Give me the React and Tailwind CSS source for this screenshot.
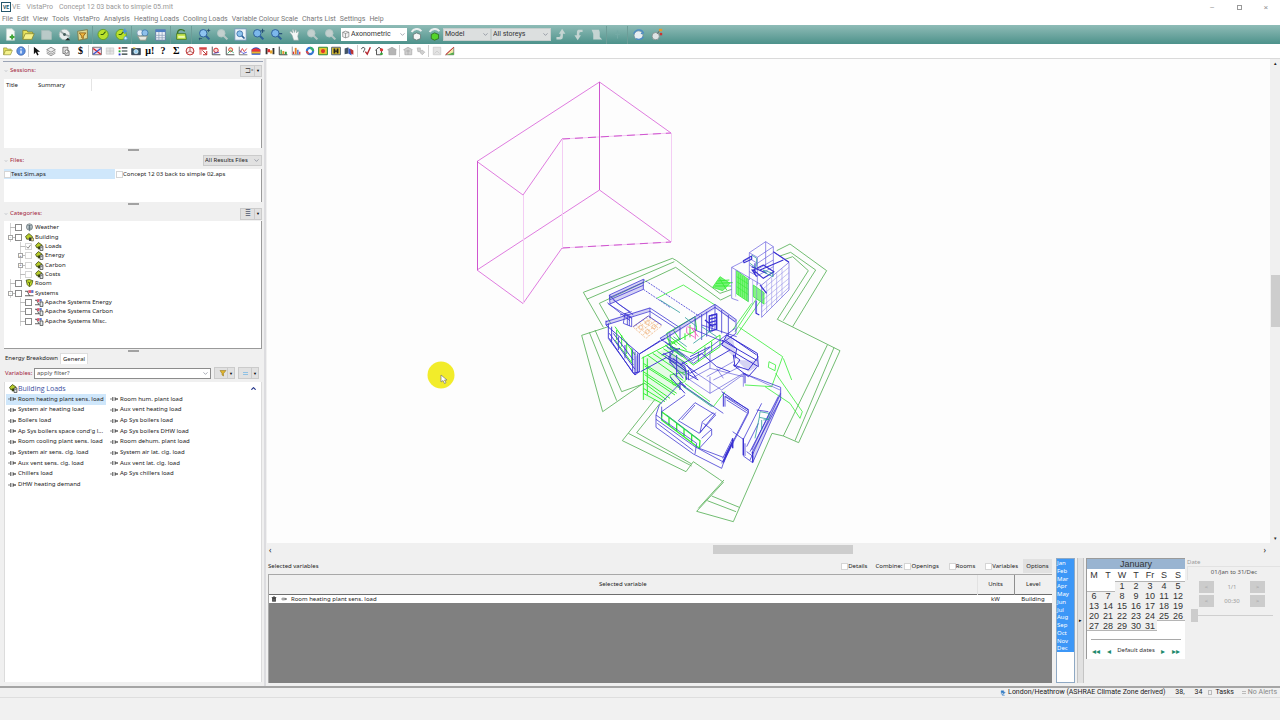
import { useState } from 'react'
import clsx from 'clsx'
import { ChevronDown, ChevronUp } from 'lucide-react'

const MENUS = [
  'File', 'Edit', 'View', 'Tools', 'VistaPro', 'Analysis', 'Heating Loads', 'Cooling Loads',
  'Variable Colour Scale', 'Charts List', 'Settings', 'Help',
]

const MONTHS = ['Jan', 'Feb', 'Mar', 'Apr', 'May', 'Jun', 'Jul', 'Aug', 'Sep', 'Oct', 'Nov', 'Dec']

const WEEKS = [
  ['', '', 1, 2, 3, 4, 5],
  [6, 7, 8, 9, 10, 11, 12],
  [13, 14, 15, 16, 17, 18, 19],
  [20, 21, 22, 23, 24, 25, 26],
  [27, 28, 29, 30, 31, '', ''],
]

const TREE = [
  { name: 'Weather', level: 0, icon: 'weather' },
  { name: 'Building', level: 0, icon: 'building', expander: '-' },
  { name: 'Loads', level: 1, icon: 'load', checked: true, faint: true },
  { name: 'Energy', level: 1, icon: 'load', expander: '+', faint: true },
  { name: 'Carbon', level: 1, icon: 'load', expander: '+', faint: true },
  { name: 'Costs', level: 1, icon: 'load', faint: true },
  { name: 'Room', level: 0, icon: 'room' },
  { name: 'Systems', level: 0, icon: 'system', expander: '-' },
  { name: 'Apache Systems Energy', level: 1, icon: 'apache' },
  { name: 'Apache Systems Carbon', level: 1, icon: 'apache' },
  { name: 'Apache Systems Misc.', level: 1, icon: 'apache' },
]

const VARIABLES = [
  ['Room heating plant sens. load', 'Room hum. plant load'],
  ['System air heating load', 'Aux vent heating load'],
  ['Boilers load', 'Ap Sys boilers load'],
  ["Ap Sys boilers space cond'g l...", 'Ap Sys boilers DHW load'],
  ['Room cooling plant sens. load', 'Room dehum. plant load'],
  ['System air sens. clg. load', 'System air lat. clg. load'],
  ['Aux vent sens. clg. load', 'Aux vent lat. clg. load'],
  ['Chillers load', 'Ap Sys chillers load'],
  ['DHW heating demand'],
]

/* ---------- icons ---------- */

const lens = (fill, rim) => (
  <>
    <path d="M9.5 9.5l4.5 4.5" stroke={rim} strokeWidth="2.6" />
    <circle cx="6.5" cy="6.5" r="4.6" fill={fill} stroke={rim} strokeWidth="1.2" />
  </>
)

const clock = (
  <>
    <circle cx="7.5" cy="8" r="6.3" fill="#b9e02c" stroke="#5f9a18" />
    <path d="M7.5 8l3-3.5M7.5 8H4.5" stroke="#2f5a10" strokeWidth="1.3" fill="none" />
  </>
)

const ICONS = {
  newDoc: <><path d="M3 1h7l3 3v11H3z" fill="#f6faf6" stroke="#c3d3d0" /><path d="M10 8v6M7 11h6" stroke="#3fa535" strokeWidth="2.4" /></>,
  folder: <><path d="M1 14V3h5l1 2h6v2" fill="#e8e35c" stroke="#88892e" /><path d="M1 14l3-7h11l-3 7z" fill="#f5f28c" stroke="#88892e" /></>,
  page: <path d="M2 3h9l3 2v9H2z" fill="#b9cac8" stroke="#a6bcb9" />,
  disc: <><circle cx="8" cy="8" r="6.5" fill="#e8edec" stroke="#a9bab8" /><path d="M8 8L3 4M8 8l6 2" stroke="#a0adac" strokeWidth="2" /><circle cx="8" cy="8" r="1.8" fill="#48605e" /><path d="M9 15l3-3 3 3z" fill="#222" /></>,
  filterBox: <><path d="M2 4l12-2v11l-11 2z" fill="#e2d98f" stroke="#7b7440" /><path d="M4 6h8l-3 4v3l-2-1v-2z" fill="#f0b33a" stroke="#8a5b14" /></>,
  clock,
  clockPlus: <>{clock}<path d="M12 1v6M9.5 4h5" stroke="#4a93e0" strokeWidth="1.8" /><circle cx="13" cy="12.5" r="2" fill="#d8ecfb" stroke="#4a93e0" /></>,
  globe: <><circle cx="5" cy="6" r="3.8" fill="#e7eff6" stroke="#7e9cb6" /><circle cx="11" cy="6" r="3.8" fill="#8fc0ea" stroke="#3e78ad" /><path d="M2 10h12l-2 5H5z" fill="#e8e8e0" stroke="#8d8f82" /></>,
  table: <><path d="M2 2h12v13H2z" fill="#eef2f7" stroke="#5874a0" /><path d="M2 2h12v3H2z" fill="#4f7fc3" /><path d="M6 5v10M10 5v10M2 9h12M2 12h12" stroke="#90a2bd" /></>,
  bag: <><path d="M3 7c0-6 6-6 9-3" stroke="#3b7325" strokeWidth="1.6" fill="none" /><path d="M2 7h11l1 7H2z" fill="#c8e84f" stroke="#3b7325" /><path d="M4 11h8" stroke="#f4ffcf" strokeWidth="1.8" /></>,
  zoomFit: <>{lens('#8ec4f0', '#2d6199')}<path d="M13 1v4M11 3h4M2 12v3M1 13h4" stroke="#274d74" /></>,
  zoomOff: lens('#c3d0ce', '#b4c6c4'),
  zoomBox: <><path d="M1 1h14v14H1z" fill="#eef5fb" stroke="#6f93b5" /><g transform="translate(2 2) scale(.78)">{lens('#8ec4f0', '#2d6199')}</g></>,
  zoomIn: <>{lens('#7cb8ec', '#2d6199')}<path d="M13 1v5M10.5 3.5h5" stroke="#214a73" strokeWidth="1.2" /></>,
  zoomOut: <>{lens('#7cb8ec', '#2d6199')}<path d="M11 7h4" stroke="#214a73" strokeWidth="1.4" /></>,
  hand: <path d="M5 9L2 5l1.4-1L6 6 5 2l1.5-.6L8 5.4 9 2l1.4.4V6l2-2 1 1-1.4 5 1 5H7z" fill="#f3f6f6" stroke="#8fa5a3" strokeWidth=".7" />,
  cubeGrey: <><path d="M4 8l4-2 5 2v5l-5 2-4-2z" fill="#f4f6f6" stroke="#627573" /><path d="M2 5c3-5 9-5 12-1" fill="none" stroke="#e9eeee" strokeWidth="2.4" /></>,
  cubeGreen: <><path d="M4 8l4-2 5 2v5l-5 2-4-2z" fill="#55d42c" stroke="#2a6d1c" /><path d="M2 5c3-5 9-5 12-1" fill="none" stroke="#e9eeee" strokeWidth="2.4" /></>,
  arrowUp: <path d="M3 14h5c3 0 3-2 3-7h3L10 1 6 7h2c0 3 0 4-2 4H3z" fill="#c4d4d2" />,
  arrowDown: <path d="M13 2H9C6 2 6 4 6 9H3l4 6 4-6H9c0-3 0-4 2-4h2z" fill="#c4d4d2" />,
  sheet: <path d="M2 2h9l1 3v6l3 3H4V7z" fill="#c4d4d2" />,
  spark: <path d="M8 3v10M5 8h6" stroke="#74aaa5" strokeWidth="1.4" />,
  orbit: <><circle cx="8" cy="9" r="5.5" fill="#e6eef2" stroke="#6c8a9a" /><path d="M2 7c3-6 10-6 12-1l-3 1M14 11c-2 3-6 4-9 2" fill="none" stroke="#4d8cc4" strokeWidth="1.7" /></>,
  tag: <><circle cx="7" cy="10" r="4.5" fill="#dfe4e4" stroke="#7c8a89" /><path d="M9 7l3-4" stroke="#555" /><path d="M11 1h4v3h-4z" fill="#e8992c" /><path d="M12 6h3v3h-3z" fill="#c33" /></>,
  info: <><circle cx="8" cy="8" r="6.8" fill="#5b8fe0" stroke="#32579b" /><path d="M8 7v5" stroke="#fff" strokeWidth="2.2" /><circle cx="8" cy="4.4" r="1.2" fill="#fff" /></>,
  arrow: <path d="M3 1v12l3-3 2.4 5 2.2-1-2.3-4.8H13z" fill="#111" />,
  layers: <><path d="M1 6l7-4 7 4-7 4z" fill="#eee" stroke="#555" /><path d="M1 9l7 4 7-4M1 11.5l7 4 7-4" fill="none" stroke="#555" /></>,
  docs: <><path d="M3 2h8v4l2 2v7H7l-1-3H3z" fill="#ddd" stroke="#444" /><circle cx="9" cy="9" r="2.6" fill="#fff" stroke="#444" /></>,
  chartX: <><path d="M1 2h14v12H1z" fill="#f3dcec" stroke="#333" /><path d="M2 4l12 9" stroke="#d22" strokeWidth="2" /><path d="M2 13L14 4" stroke="#35c" strokeWidth="2" /></>,
  greyGrid: <path d="M2 3h12v10H2zM2 8h12M8 3v10" fill="#e6e6e6" stroke="#c2c2c2" />,
  list: <><path d="M6 3h9M6 8h9M6 13h9" stroke="#233" strokeWidth="1.8" /><path d="M1 2h3v3H1z" fill="#d33" /><path d="M1 7h3v3H1z" fill="#2a2" /><path d="M1 12h3v3H1z" fill="#23c" /></>,
  camera: <><path d="M1 4h14v10H1z" fill="#356" stroke="#223" /><path d="M3 2h4v2H3z" fill="#e9d34a" /><circle cx="8" cy="9" r="3.4" fill="#9cd0f0" stroke="#fff" /></>,
  roseRed: <><circle cx="8" cy="8" r="6.3" fill="#fdeaea" stroke="#b22" strokeWidth="1.5" /><path d="M8 2v6l5 3M8 8l-5 3" stroke="#822" fill="none" /></>,
  gridRed: <><path d="M2 2h12v4H2z" fill="#d54545" /><path d="M2 6h4v8H2z" fill="#f0a0a0" /><path d="M7 7l7 7M14 8v6H8" stroke="#b22" strokeWidth="1.5" fill="none" /></>,
  axisRed: <><path d="M2 1v13h13" fill="none" stroke="#333" strokeWidth="1.3" /><circle cx="8" cy="7" r="3.6" fill="#fbd5d5" stroke="#c22" strokeWidth="1.5" /><path d="M4 12l9-2" stroke="#44b" strokeWidth="1.3" /></>,
  axisPlot: <><path d="M2 1v13h13" fill="none" stroke="#333" strokeWidth="1.3" /><circle cx="9" cy="6" r="3.2" fill="#fbe2b5" stroke="#c22" strokeWidth="1.3" /><path d="M4 12l5-5 5 4" stroke="#2a6" strokeWidth="1.3" fill="none" /></>,
  lines: <><path d="M2 1v13h13" fill="none" stroke="#333" /><path d="M3 11l4-7 3 5 4-5" fill="none" stroke="#c33" strokeWidth="1.3" /><path d="M3 7l5 5 6-2" fill="none" stroke="#33c" strokeWidth="1.3" /></>,
  bands: <><path d="M1 5q7-6 14 0v9H1z" fill="#2b4fc4" /><path d="M1 6q7-5 14 0v3H1z" fill="#e33" /><path d="M1 9h14v3H1z" fill="#ecb62c" /></>,
  box: <><path d="M1 3h3v10H1zM12 3h3v10h-3z" fill="#333" /><path d="M4 5h4v5H4z" fill="#d33" /><path d="M8 7h4v5H8z" fill="#e7a42b" /></>,
  barsGreen: <><path d="M2 1v13h13" fill="none" stroke="#333" strokeWidth="1.5" /><path d="M4 6h2v7H4zM11 9h3v4h-3z" fill="#2a9a3a" /><path d="M7 8h3v5H7z" fill="#e0962b" /></>,
  barsRed: <><path d="M2 1v13h13" fill="none" stroke="#555" /><path d="M3 9h2v4H3z" fill="#d33" /><path d="M6 3h3v10H6z" fill="#e0812b" /><path d="M10 6h2v7h-2z" fill="#345bc4" /><path d="M13 9h2v4h-2z" fill="#d33" /></>,
  donut: <><circle cx="8" cy="8" r="5" fill="none" stroke="#3578d2" strokeWidth="3.4" /><path d="M8 3a5 5 0 0 1 5 5" fill="none" stroke="#35b06a" strokeWidth="3.4" /><path d="M3 8a5 5 0 0 0 3 4.6" fill="none" stroke="#d84d4d" strokeWidth="3.4" /></>,
  heat: <><path d="M1 2h14v12H1z" fill="#e6c832" stroke="#2c8a3a" strokeWidth="1.6" /><circle cx="8" cy="8" r="3.4" fill="#e0382b" /></>,
  heatDark: <><path d="M1 2h14v12H1z" fill="#e6c832" stroke="#567" strokeWidth="1.6" /><path d="M4 4h3v8H4zM9 4h3v8H9zM7 7h2v2H7z" fill="#222" /></>,
  surface: <><path d="M1 4l6-2v10l-6 1z" fill="#456" /><path d="M7 3l5 3v9l-5-3z" fill="#3557c4" /><path d="M10 4l5 3v7l-4-2z" fill="#b33" /></>,
  check: <><path d="M7 9l3 4 5-11" fill="none" stroke="#b3262e" strokeWidth="2.2" /><path d="M1 5c0-4 6-3 5 0C6 7 4 7 4 10" fill="none" stroke="#333" strokeWidth="1.4" /></>,
  house: <><path d="M2 7l6-5 6 5M4 6v8h8V6" fill="#f5f5f5" stroke="#333" strokeWidth="1.3" /><circle cx="12" cy="6" r="2.6" fill="#d33" /><path d="M10 11h4v3h-4z" fill="#3a3" /></>,
  greyHouse: <path d="M1 6l7-4 7 4-1 1v7H3V7z" fill="#b5b5b5" stroke="#9b9b9b" />,
  greyCube: <path d="M1 6l7-4 7 4-1 1v7H3V7zM8 6v8M5 8h6" fill="#cfcfcf" stroke="#a0a0a0" />,
  greyPlug: <path d="M2 3h5v4h4l3 3-4 4-3-3V9H3z" fill="#cfcfcf" stroke="#ababab" />,
  greyPic: <path d="M2 2h12v12H2zM4 12l4-4 4 4" fill="#e3e3e3" stroke="#c4c4c4" />,
  ramp: <><path d="M1 14L14 2v12z" fill="#f2e7a8" stroke="#555" /><path d="M1 14L14 2" stroke="#d33" strokeWidth="1.6" /><path d="M4 14l10-4v4z" fill="#4aad4a" /></>,
  weather: <><circle cx="8" cy="7" r="5.6" fill="#c9d3d6" stroke="#4d585c" /><path d="M4 5h8M5 9h7M8 3v11" stroke="#50616b" strokeWidth="1.3" /><path d="M6 12h4l-2 3z" fill="#789" /></>,
  building: <><path d="M1 6l6-5 6 5v5H3z" fill="#b7cc2c" stroke="#3b4312" strokeWidth="1.3" /><path d="M7 8h4v6H7z" fill="#333" /><path d="M11 9h4v5h-4z" fill="#f3ef8a" stroke="#333" /></>,
  load: <><path d="M1 6l5-5 6 4v5H3z" fill="#b7cc2c" stroke="#3b4312" strokeWidth="1.4" /><path d="M5 8h4v5H5z" fill="#3d4a16" /><path d="M9 7h5v8H9z" fill="#e9eef0" stroke="#222" strokeWidth="1.2" /><path d="M10 10h3" stroke="#222" /></>,
  room: <><path d="M2 2l6-1 6 2-2 7-4 4-4-4z" fill="#c6e02c" stroke="#2d3b10" strokeWidth="1.3" /><path d="M5 5l3 2 3-3M8 7v5" stroke="#2d3b10" fill="none" strokeWidth="1.4" /></>,
  system: <><path d="M0 4h6M0 12h15M4 4l4 8" stroke="#444" strokeWidth="1.5" fill="none" /><path d="M6 2h5v5H6z" fill="#e4586b" /><path d="M11 2h4v5h-4z" fill="#5a72c8" /></>,
  apache: <><path d="M0 4h5M0 12h8M3 4l4 8" stroke="#444" strokeWidth="1.5" fill="none" /><path d="M4 2h4v5H4z" fill="#e4586b" /><path d="M8 2h4v4H8z" fill="#5a72c8" /><path d="M9 7h5v8H9z" fill="#e9eef0" stroke="#222" strokeWidth="1.2" /></>,
  pin: <path d="M0 8h5M5 4v8M5 6h6v4H5M11 5v6M11 7h5M11 9h5" fill="none" stroke="#555" strokeWidth="1.4" />,
  trash: <><path d="M2 4h12M6 2h4" stroke="#222" strokeWidth="2" /><path d="M3 5h10v10H3z" fill="#333" /><path d="M6 7v6M10 7v6" stroke="#ccc" /></>,
  funnel: <path d="M2 3h12l-5 6v5l-3-2V9z" fill="#e0b52e" stroke="#8b6d17" />,
  sync: <><path d="M3 2h7v4h4l-5 5V7H3zM13 14H6v-4H2" fill="#2c79c4" stroke="#2c79c4" /></>,
  cube: <path d="M3 4l5-2 6 2v8l-6 2-5-2zM3 4l5 2 6-2M8 6v8" fill="#f2f2f2" stroke="#666" />,
}

function Icon({ name, className = 'size-[11px]' }) {
  return <svg viewBox="0 0 16 16" className={clsx('shrink-0', className)} aria-hidden="true">{ICONS[name]}</svg>
}

function ToolGroup({ icons, label, big, className }) {
  return (
    <div className={clsx('flex items-center', className)}>
      {icons.map((name, i) => (
        <button key={i} aria-label={label + ' ' + (i + 1)} className={clsx('flex items-center justify-center shrink-0', big ? 'w-[18px] h-4' : 'w-[13px] h-3')}>
          {ICONS[name]
            ? <Icon name={name} className={big ? 'size-[13px]' : 'size-[10px]'} />
            : <span className="font-['Liberation_Serif',serif] text-[10px] leading-none font-bold text-black">{name}</span>}
        </button>
      ))}
    </div>
  )
}

function Sep({ big }) {
  return <span className={clsx('shrink-0 w-px mx-px', big ? 'h-[18px] bg-[#6d9d98]' : 'h-3 bg-[#cfcfcf]')} />
}

function DropDown({ label, options, className }) {
  return (
    <div className={clsx('relative flex shrink-0', className)}>
      <select aria-label={label} className="appearance-none size-full pl-px pr-3 outline-none">
        {options.map(o => <option key={o}>{o}</option>)}
      </select>
      <ChevronDown className="absolute right-px top-0 h-full w-[7px] pointer-events-none text-gray-500" />
    </div>
  )
}

function Tick({ label, checked = false, faint, className, children }) {
  const [on, setOn] = useState(checked)
  return (
    <label className={clsx('flex items-center', className)}>
      <span className="relative flex">
        <input
          type="checkbox"
          aria-label={label}
          checked={on}
          onChange={e => setOn(e.target.checked)}
          className={clsx('appearance-none size-[7px] bg-white border', faint ? 'border-[#d5d5d5]' : 'border-[#8a8a8a]')}
        />
        {on && (
          <svg viewBox="0 0 8 8" className="absolute inset-0 size-[7px] pointer-events-none">
            <path d="M1.5 4l2 2 3-4" fill="none" stroke="#777" />
          </svg>
        )}
      </span>
      {children}
    </label>
  )
}

/* ---------- left panel ---------- */

function SectionHead({ title, children, className }) {
  return (
    <div className={clsx('flex items-center justify-between pl-[2px]', className)}>
      <h2 className="flex items-center gap-[2px] text-[#a3243c]">
        <ChevronDown className="size-1 text-gray-500" />
        {title}
      </h2>
      {children}
    </div>
  )
}

function Handle() {
  return (
    <div className="h-1 shrink-0 flex items-center justify-center">
      <span className="w-[11px] h-[2px] bg-[#a2a2a2]" />
    </div>
  )
}

function SplitButton({ label, children, className = 'w-[22px]' }) {
  return (
    <button aria-label={label} className={clsx('h-[12px] flex items-center justify-between bg-[#e1e1e1] border border-[#cbcbcb] pl-1', className)}>
      {children}
      <span className="h-full w-[7px] border-l border-[#cbcbcb] flex items-center justify-center text-[4px] text-black">▼</span>
    </button>
  )
}

function Tree() {
  return (
    <ul className="relative grid auto-rows-fr h-[103px] mt-[2px]">
      {TREE.map(node => (
        <li key={node.name} className={clsx('flex items-center', node.level ? 'pl-3' : 'pl-[2px]')}>
          <span className="relative w-[9px] h-full shrink-0 flex items-center">
            <span className="absolute left-1 top-0 w-px h-full bg-[#d2d2d2]" />
            <span className="absolute left-1 w-[5px] h-px bg-[#bdbdbd]" />
            {node.expander && (
              <span className="relative ml-[2px] size-[5px] border border-[#a5a5a5] bg-white flex items-center justify-center text-[4px] leading-none">
                {node.expander}
              </span>
            )}
          </span>
          <Tick label={node.name} checked={node.checked} faint={node.faint}>
            <Icon name={node.icon} className="size-[9px] ml-[3px] mr-px" />
            {node.name}
          </Tick>
        </li>
      ))}
    </ul>
  )
}

function Variable({ name, selected }) {
  return (
    <button className={clsx('flex items-center gap-[2px] h-full pl-[2px] whitespace-nowrap text-left', selected && 'bg-[#cfe7fb]')}>
      <Icon name="pin" className="size-[8px]" />
      {name}
    </button>
  )
}

function SidePanel() {
  return (
    <aside className="w-[266px] shrink-0 flex flex-col bg-[#f0f0f0] border-r-2 border-[#dcdcdf] pl-1 pr-[2px] pb-1">
      <div className="h-px mt-[2px] -mx-px bg-[#9aa3b5] shrink-0" />
      <SectionHead title="Sessions:" className="h-[17px] -ml-[2px]">
        <SplitButton label="Session actions"><span className="text-[7px] leading-none text-[#555]">⊐ˣ</span></SplitButton>
      </SectionHead>
      <table className="block h-[69px] shrink-0 bg-white border-r border-[#9a9a9a] text-left">
        <thead>
          <tr className="h-3">
            <th className="font-normal w-[34px] pl-[2px]">Title</th>
            <th className="font-normal w-[53px] border-r border-[#e4e4e4]">Summary</th>
          </tr>
        </thead>
      </table>
      <Handle />

      <SectionHead title="Files:" className="h-[17px] -ml-[2px]">
        <DropDown label="Files" options={['All Results Files']} className="w-[59px] h-[11px] bg-[#e1e1e1] border border-[#cbcbcb]" />
      </SectionHead>
      <div className="h-[33px] shrink-0 bg-white border-r border-[#9a9a9a]">
        <div className="flex h-[10px]">
          <Tick label="Test Sim.aps" faint className="w-[111px] bg-[#cfe7fb]">Test Sim.aps</Tick>
          <Tick label="Concept 12 03 back to simple 02.aps" faint className="pl-px">Concept 12 03 back to simple 02.aps</Tick>
        </div>
      </div>
      <Handle />

      <SectionHead title="Categories:" className="h-[15px] -ml-[2px]">
        <SplitButton label="Category view"><span className="text-[7px] leading-none text-gray-500">≣</span></SplitButton>
      </SectionHead>
      <div className="h-[128px] shrink-0 bg-white border-r border-b border-[#9a9a9a]">
        <Tree />
      </div>
      <Handle />

      <div className="flex items-center h-[11px] shrink-0" role="tablist">
        <button role="tab" className="pl-px pr-[2px]">Energy Breakdown</button>
        <button role="tab" aria-selected="true" className="bg-white h-full px-[2px] border border-[#dedede] border-b-0">General</button>
      </div>
      <div className="flex items-center h-[18px] shrink-0 pl-px">
        <label htmlFor="filter" className="text-[#a3243c] w-[29px]">Variables:</label>
        <div className="relative flex">
          <input id="filter" defaultValue="apply filter?" className="w-[177px] h-[11px] bg-white border border-[#8c8c8c] px-[2px] text-[#555] outline-none" />
          <ChevronDown className="absolute right-[2px] top-[2px] size-[7px] text-gray-500" />
        </div>
        <SplitButton label="Filter" className="w-[21px] ml-[3px]"><Icon name="funnel" className="size-[8px]" /></SplitButton>
        <SplitButton label="Sort" className="w-[21px] ml-[3px]"><span className="w-[5px] h-[3px] border-y border-[#8fc1e4]" /></SplitButton>
      </div>
      <div className="flex-1 bg-white border-x border-[#dcdcdc]">
        <div className="flex items-center justify-between h-[12px] px-1">
          <h3 className="flex items-center font-['Open_Sans',sans-serif] text-[7px] text-[#3b50a0]">
            <Icon name="load" className="size-[9px]" />
            Building Loads
          </h3>
          <ChevronUp className="size-[7px] text-[#23348a]" strokeWidth={4} />
        </div>
        <div className="grid auto-rows-fr grid-cols-[100px_1fr] gap-x-[2px] h-[96px] pl-px">
          {VARIABLES.map(([left, right]) => [
            <Variable key={left} name={left} selected={left === VARIABLES[0][0]} />,
            right ? <Variable key={right} name={right} /> : <span key="blank" />,
          ])}
        </div>
      </div>
    </aside>
  )
}

/* ---------- model view ---------- */

function Model() {
  return (
    <svg viewBox="267 59 1003 484" preserveAspectRatio="xMinYMin meet" className="absolute inset-0 size-full" role="img" aria-label="Axonometric model">
      {/* detached magenta block */}
      <g fill="none" stroke="#df7cdf" strokeWidth="1">
        <path d="M562 139L523 195 477 161.500 599.500 82 671 133M562 248L523 303.500 477 270 599.500 190 671 242" />
        <path d="M562 139L671 133M562 248L671 242" stroke="#f4c6f4" />
        <path d="M562 139L671 133M562 248L671 242" strokeDasharray="8 5" stroke="#cf55cf" />
        <path d="M477.500 161V270M599.500 82V190" stroke="#cf55cf" />
        <path d="M523.500 195V303M562.500 139V248M671.500 133V242" stroke="#f4cdf4" />
      </g>

      <g transform="translate(570 230) scale(.33333)" fill="none" strokeLinejoin="round">
        {/* site outlines */}
        <g stroke="#5cb35c" strokeWidth="2.6">
          <path d="M100 292L40 187 307 85 320 92 450 190 485 178M50 208L313 95M122 280L88 220 317 112 452 210 483 195" />
          <path d="M620 62L660 42 770 122 668 290M630 78L662 67 737 120 640 272M645 88L668 80 715 122 622 268L810 362 686 638 640 618 606 610 490 875 380 844 460 757 448 748 370 695 348 725 157 632 255 508" />
          <path d="M115 290L35 316 98 545 220 460M58 307L140 512M75 300L155 485 225 460M772 345L640 618M792 353L675 632" />
          <path d="M175 610L365 708M270 520L200 608 365 702M425 798L508 832M412 812L498 845M385 835L462 750" />
        </g>

        {/* planting and glazing */}
        <g stroke="#36ee36" strokeWidth="2.4">
          <path d="M260 205L340 165 435 225M508 292L638 380 605 470 525 465M617 430L697 545 690 565 660 520 585 470M597 395L617 405 615 422 595 412ZM640 385L665 450" />
          <path d="M560 205L495 305M570 215L500 315M545 220L488 300" />
          <path d="M428 172L450 140 480 160 458 182Z" fill="#36ee36" fillOpacity=".65" />
          <path d="M434 168L484 168M438 160L488 158M443 153L478 150M448 145L470 180" strokeWidth="3" />
          <path d="M500 122V192L535 215V148ZM550 165V200L582 222V188Z" fill="#36ee36" fillOpacity=".6" />
          <path d="M506 130V195M512 134V198M518 138V202M524 142V206M530 146V210M500 140L535 162M500 155L535 178M500 170L535 194" strokeWidth="2" />
          <path d="M220 385L300 350 350 410 330 470 275 520 220 508Z" fill="#36ee36" fillOpacity=".12" stroke="none" />
          <path d="M220 380V510M215 385L330 325M220 400L330 470M224 408L330 475M220 425L320 490M224 434L315 495M220 450L300 505M224 460L290 510M220 475L285 515M220 490L275 520M232 375L340 452M248 370L345 435M262 364L350 425M280 356L352 402M232 385V495" strokeWidth="3" />
          <path d="M135 290L195 375M140 300V330M155 315V350M170 335V372M185 355V395M135 330L190 405" strokeWidth="3" />
          <path d="M290 310L375 260 380 300 300 345ZM300 350L370 405 450 350V315L370 370ZM385 365V395M405 350V380M425 335V365M345 330V310M360 322V285M300 320L350 360M295 340L345 380M290 325L320 345M285 345L330 375M310 300L330 330" strokeWidth="3" />
          <path d="M275 545L390 632 388 655 275 570ZM297 562V588M320 579V605M342 595V621M365 612V638" strokeWidth="4" />
          <path d="M335 465L430 530 465 485M345 460L420 515M300 435L350 425 345 455 310 465Z" />
        </g>

        {/* furniture */}
        <g stroke="#efb27c" strokeWidth="2">
          <path d="M188 290L235 258 275 288 228 325ZM197 284L237 318M208 277L247 310M219 270L257 302M228 263L266 295M197 297L245 265M208 306L256 273M218 315L265 281" strokeDasharray="7 3" />
          <circle cx="212" cy="292" r="6" /><circle cx="232" cy="278" r="6" /><circle cx="232" cy="305" r="6" /><circle cx="252" cy="290" r="6" />
        </g>
        <path d="M352 290L376 298V328M350 292V308L374 322M365 295L385 320" stroke="#ee55bb" strokeWidth="2.6" />

        {/* shaded roof edges and walls */}
        <g fill="#4a40d8" fillOpacity=".22">
          <path d="M118 195L220 148V178L120 222ZM108 272L240 232V242L112 286ZM270 325L435 223 440 234 278 334ZM435 223L500 270 495 278 435 234Z" />
          <path d="M195 380L208 372V425L195 435ZM455 345L470 315 490 330 500 390 562 392V410L535 425ZM300 365L345 395V440L300 405Z" />
          <path d="M545 660L600 545 632 480V508L548 698Z" />
        </g>

        {/* walls */}
        <g stroke="#3a32d2" strokeWidth="2.3">
          <path d="M485 112V205L505 212M485 112L575 165V262L657 180V97L575 165M657 97L610 65M538 68L587 35 610 50V140M538 68V150M538 68L562 82V165M587 35V110M562 82L610 50M485 112L538 85M538 85L562 100 610 68M538 105L562 118 610 90M538 125L562 138 610 110" strokeWidth="2" stroke="#6058de" />
          <path d="M575 180L657 112M575 197L657 128M575 213L657 145M575 230L657 160M575 246L657 172M497 120V200M535 140V215M548 150V225M560 158V252M590 155V248M605 143V232M620 130V218M636 116V202" strokeWidth="1.4" stroke="#7f79e6" />
          <path d="M520 92L545 78 545 88 522 98ZM550 120L580 105 612 125 580 145ZM555 100V135M545 110L590 130M545 118L560 140M570 120L640 90M570 165L590 190M568 255L558 250V212M610 65L657 97" strokeWidth="3.500" />

          <path d="M118 195L220 148V178L120 222ZM118 203L220 157M118 210L220 166M115 222L185 265M128 208L190 255M112 218L180 272M118 195L145 222 180 245" />
          <path d="M220 148L390 260M220 178L300 232" strokeDasharray="6 3" />
          <path d="M108 275L240 234 325 290M108 285L240 244 318 295M240 234V265M165 250L185 262V290L160 280ZM172 255V285M178 258V288M150 255L185 245M190 290L235 258 275 285" />
          <path d="M108 272V285L208 372 270 332M115 280V325L195 435 208 425V372M125 290V335M195 365V435M202 370V428M188 358V425M118 310L195 418M118 325L190 430M208 372L285 325M212 425L290 382M130 310L190 390M145 320V360M165 345V385" strokeWidth="2.800" />

          <path d="M270 325L435 223 500 270M270 325L370 400 498 310V270M275 332L435 232 495 275M285 335L368 392 495 295M300 310V345M330 290V330M375 265V300M395 252V330M410 245V320M435 225V300M455 240V310M475 255V320M418 255V300M426 252V305M440 250L440 300M395 285L500 320M375 300L460 335" />
          <path d="M418 258L440 252V298L418 304ZM418 268L440 262M418 278L440 272M418 288L440 282M405 270L430 290" strokeWidth="4" />
          <path d="M455 345L565 410 562 370 470 315M455 330L562 392M470 315L455 345M565 380L535 420 490 405 535 440 560 412M490 375L510 390 495 410ZM480 320L560 375M465 330L500 355 495 385" strokeWidth="3" />
          <path d="M280 370L345 410M285 380L350 425M300 365V400M320 375V440M275 375L330 355M310 385L360 430 420 395 480 360M350 405L380 445M345 410L350 450M290 350L310 365 295 385 320 400M335 395L380 430M300 395L340 445M360 380L420 350M330 405L395 370 440 410 480 425" strokeWidth="2.800" />
          <path d="M420 365V415L355 450M420 415L520 440M380 430L455 480M410 440L490 395M430 450L510 410M455 480L525 430M460 445L440 415M420 440V490L345 440M420 490L520 430L630 480M520 430V470" strokeWidth="1.600" />

          <path d="M330 460L460 550M258 555L268 525 330 460 348 470M258 555V592L370 672 455 715 465 685 535 550V538L465 498V530M258 568L375 650 458 695M262 580L370 662M275 530V560M258 555L380 640 375 672" />
          <path d="M345 495L275 545M375 518L325 572 388 610 437 555ZM375 525L335 570M437 548L390 608 397 575 430 548M388 655L425 615V598L400 580M388 655L460 682M425 598L395 625M465 500L535 545 455 700M470 510L530 548M488 640L460 700M488 625L458 685" />
          <path d="M488 625V655M485 640L460 695M490 630L465 680" strokeWidth="4.500" />
          <path d="M520 430L632 472V508L548 698 520 678V628L575 520M632 508L545 670M625 500L540 665M632 490L540 690M520 628L488 605M525 640V678M548 680V698M530 665L550 680M565 580L530 650M545 660L600 545M595 545L560 540" />
          <path d="M520 625V675M548 665V697" strokeWidth="4" />
          <path d="M525 430V460M460 490V530M455 485L535 540M330 455V480M300 440L345 490M190 430L210 425M310 430L345 470M350 430L385 450M355 420V450" strokeWidth="3" />
        </g>

        {/* partitions */}
        <g stroke="#2e9c9c" strokeWidth="2.400">
          <path d="M570 545L597 550V568L568 562ZM568 562L555 625M575 570V600M597 568L580 570M270 210L330 248M345 262L380 290M545 75L560 85V110M540 100L560 115M580 120L608 130V140L585 128ZM370 340L425 300M310 320L350 350M340 470L425 530M290 555L385 628M395 290L440 320M300 350L335 380" />
        </g>
      </g>

      {/* pointer highlight */}
      <circle cx="441" cy="375" r="13.500" fill="#f2ec2a" />
      <path d="M441 375v7l2-1.500 1.500 3 1.500-.8-1.500-2.700h2.500z" fill="#fff" stroke="#777" strokeWidth=".7" />
    </svg>
  )
}

/* ---------- lower panel ---------- */

function SelectedVariables() {
  return (
    <section className="flex-1 flex flex-col min-w-0 pl-[2px]">
      <div className="flex items-center h-4 shrink-0">
        <h2 className="flex-1">Selected variables</h2>
        <Tick label="Details" faint className="mr-[8px]">Details</Tick>
        <span className="mr-[2px]">Combine:</span>
        <Tick label="Openings" faint className="mr-[10px]">Openings</Tick>
        <Tick label="Rooms" faint className="mr-[10px]">Rooms</Tick>
        <Tick label="Variables" faint className="mr-[5px]">Variables</Tick>
        <button className="bg-[#e1e1e1] h-[14px] w-[29px]">Options</button>
      </div>
      <div className="flex-1 bg-[#808080] border-t border-l border-[#a8a8a8]">
        <table className="w-full border-collapse text-center">
          <thead>
            <tr className="h-[19px] bg-[#f0f0f0] border-b border-[#6e6e6e]">
              <th className="font-normal">Selected variable</th>
              <th className="font-normal w-[37px] border-l border-[#e2e2e2]">Units</th>
              <th className="font-normal w-[38px] border-l border-[#8f8f8f]">Level</th>
            </tr>
          </thead>
          <tbody>
            <tr className="h-2 bg-white leading-[8px]">
              <td>
                <span className="flex items-center gap-1 pl-[2px]">
                  <Icon name="trash" className="size-[6px]" />
                  <Icon name="pin" className="size-[6px]" />
                  <span>Room heating plant sens. load</span>
                </span>
              </td>
              <td>kW</td>
              <td>Building</td>
            </tr>
          </tbody>
        </table>
      </div>
    </section>
  )
}

function Calendar() {
  return (
    <div className="w-[99px] h-[101px] shrink-0 bg-white border-t border-l border-[#9a9a9a] font-['Liberation_Sans',sans-serif] text-[9px] text-[#333]">
      <table className="w-full table-fixed border-collapse text-center leading-[10px]">
        <caption className="bg-[#99b4d1] h-[10px] leading-[10px]">January</caption>
        <thead>
          <tr className="h-3">
            {['M', 'T', 'W', 'T', 'Fr', 'S', 'S'].map((d, i) => <th key={i} className="font-normal p-0">{d}</th>)}
          </tr>
        </thead>
        <tbody>
          {WEEKS.map((week, w) => (
            <tr key={w} className="h-[10px]">
              {week.map((day, i) => (
                <td
                  key={i}
                  className={clsx(
                    'p-0 border-[#b5b5b5]',
                    day && 'bg-[#f0f0f0]',
                    day && (w === 0 || (w === 1 && i < 2)) && 'shadow-[inset_0_1px_0_#b5b5b5]',
                    day && ((w === 4) || (w === 3 && i > 4)) && 'shadow-[inset_0_-1px_0_#b5b5b5]',
                  )}
                >
                  {day}
                </td>
              ))}
            </tr>
          ))}
        </tbody>
      </table>
      <div className="mx-1 mt-2 border-t border-[#a9a9a9] h-4 flex items-end justify-between px-px text-[#1c8a6c] font-['Open_Sans',sans-serif] text-[8px]">
        <button aria-label="First">◂◂</button>
        <button aria-label="Previous">◂</button>
        <button className="font-['Noto_Sans',sans-serif] text-[6px] text-[#333]">Default dates</button>
        <button aria-label="Next">▸</button>
        <button aria-label="Last">▸▸</button>
      </div>
    </div>
  )
}

function Stepper({ value }) {
  return (
    <div className="flex items-center justify-between pl-3 pr-[15px] h-[14px]">
      <button aria-label="Back" className="w-[15px] h-[12px] bg-[#cccccc]">&lt;</button>
      {value}
      <button aria-label="Forward" className="w-[15px] h-[12px] bg-[#cccccc]">&gt;</button>
    </div>
  )
}

function DatePanel() {
  return (
    <fieldset className="w-[95px] shrink-0 text-[#9a9a9a] pl-[2px]">
      <legend className="leading-[8px]">Date</legend>
      <p className="border-t border-l border-[#e2e2e2] h-[14px] pt-px text-center text-[#555]">01/Jan to 31/Dec</p>
      <Stepper value="1/1" />
      <Stepper value="00:30" />
      <input
        type="range"
        aria-label="Time"
        defaultValue="0"
        className="appearance-none block w-[82px] ml-1 mt-px h-[13px] bg-[linear-gradient(#cfcfcf,#cfcfcf)] bg-[length:100%_1px] bg-center bg-no-repeat [&::-webkit-slider-thumb]:appearance-none [&::-webkit-slider-thumb]:w-[7px] [&::-webkit-slider-thumb]:h-[13px] [&::-webkit-slider-thumb]:bg-[#cccccc]"
      />
    </fieldset>
  )
}

export default function App() {
  return (
    <div className="h-screen flex flex-col overflow-hidden bg-[#f0f0f0] font-['Noto_Sans',sans-serif] text-[6px] leading-[9px] text-[#222]">
      {/* Title bar */}
      <header className="bg-white font-['Roboto',sans-serif] text-[7px] text-[#999]">
        <div className="flex items-center h-[14px] pl-px">
          <span className="size-[10px] border border-[#24566b] text-[#24566b] font-bold text-[5px] leading-[8px] text-center">VE</span>
          <span className="ml-px">VE</span>
          <span className="ml-[6px]">VistaPro</span>
          <h1 className="ml-[6px]">Concept 12 03 back to simple 05.mit</h1>
          <div className="ml-auto flex items-center gap-[22px] pr-[12px] text-[8px]">
            <button aria-label="Minimise">–</button>
            <button aria-label="Restore"><span className="block size-[5px] border border-[#999]" /></button>
            <button aria-label="Close">×</button>
          </div>
        </div>
        <nav className="flex items-center gap-1 h-[11px] pl-[2px] text-[#777]">
          {MENUS.map(m => <button key={m}>{m}</button>)}
        </nav>
      </header>

      {/* Main toolbar */}
      <div className="flex items-center h-[19px] shrink-0 pl-px bg-linear-to-b from-[#8fbcb7] to-[#4c928b] font-['Roboto',sans-serif] text-[7px] text-[#333]">
        <ToolGroup big label="File tool" icons={['newDoc', 'folder', 'page', 'disc', 'filterBox']} />
        <Sep big />
        <ToolGroup big label="Clock tool" icons={['clock', 'clockPlus']} />
        <Sep big />
        <ToolGroup big label="Data tool" icons={['globe', 'table']} />
        <Sep big />
        <ToolGroup big label="Apply tool" icons={['bag']} />
        <Sep big />
        <ToolGroup big label="View tool" className="ml-[2px]" icons={['zoomFit', 'zoomOff', 'zoomBox', 'zoomIn', 'zoomOut', 'hand', 'zoomOff', 'zoomOff']} />
        <div className="flex items-center bg-white h-[13px] w-[66px] ml-[2px]">
          <Icon name="cube" className="size-[9px]" />
          <DropDown label="View" options={['Axonometric']} className="flex-1" />
        </div>
        <ToolGroup big label="Model tool" icons={['cubeGrey', 'cubeGreen']} />
        <DropDown label="Mode" options={['Model']} className="w-[48px] h-[13px] bg-[#dcdfdf] border border-[#c6cecd]" />
        <DropDown label="Storeys" options={['All storeys']} className="w-[60px] h-[13px] bg-[#dcdfdf] border border-[#c6cecd]" />
        <ToolGroup big label="Level tool" icons={['arrowUp', 'arrowDown', 'sheet']} />
        <Sep big />
        <ToolGroup big label="Snap tool" icons={['spark']} />
        <Sep big />
        <ToolGroup big label="Orbit tool" icons={['orbit', 'tag']} />
      </div>

      {/* Chart toolbar */}
      <div className="flex items-center h-[15px] shrink-0 pl-px bg-white border-b border-[#dadada]">
        <ToolGroup label="Open" icons={['folder', 'info']} />
        <Sep />
        <ToolGroup label="Select" className="w-[57px] justify-between" icons={['arrow', 'layers', 'docs', '$']} />
        <Sep />
        <ToolGroup
          label="Chart"
          className="w-[266px] justify-between"
          icons={['chartX', 'greyGrid', 'list', 'camera', 'μ!', '?', 'Σ', 'roseRed', 'gridRed', 'axisRed', 'axisPlot', 'lines', 'bands', 'box', 'barsGreen', 'barsRed', 'donut', 'heat', 'heatDark', 'surface']}
        />
        <Sep />
        <ToolGroup label="Check" icons={['check', 'house', 'greyHouse']} />
        <Sep />
        <ToolGroup label="Part" icons={['greyCube', 'greyPlug']} />
        <Sep />
        <ToolGroup label="Image" icons={['greyPic', 'ramp']} />
      </div>

      <div className="flex-1 flex min-h-0">
        <SidePanel />
        <main className="flex-1 flex flex-col min-w-0">
          <div className="flex-1 flex min-h-0">
            <div className="relative flex-1 bg-[#fdfdfd] ml-px"><Model /></div>
            <div className="w-[10px] flex flex-col items-center justify-between bg-[#f0f0f0] text-[5px]">
              <span>▴</span>
              <span className="w-[9px] h-[52px] bg-[#cdcdcd]" />
              <span>▾</span>
            </div>
          </div>
          <div className="flex items-center justify-between h-3 shrink-0 pl-[3px] pr-[14px] text-[8px]">
            <span>‹</span>
            <span className="w-[140px] h-[9px] bg-[#cdcdcd] ml-[31px]" />
            <span>›</span>
          </div>

          {/* Results */}
          <div className="h-[131px] shrink-0 flex pt-[3px] pb-[3px]">
            <SelectedVariables />
            <ul className="w-[19px] ml-1 shrink-0 bg-white border border-[#8fa9c4]">
              <li>
                <ul className="grid auto-rows-fr h-[93px] bg-[#3c97f7] text-white">
                  {MONTHS.map(m => <li key={m} className="leading-[8px]">{m}</li>)}
                </ul>
              </li>
            </ul>
            <button aria-label="Toggle calendar" className="w-[7px] mx-[2px] shrink-0 bg-[#e1e1e1] border-x border-[#c4c4c4] text-[5px] text-black flex items-center justify-center">▸</button>
            <Calendar />
            <DatePanel />
          </div>
        </main>
      </div>

      {/* Status bar */}
      <footer className="flex items-center justify-end h-[12px] shrink-0 border-t-2 border-b border-t-[#a5a5a5] border-b-[#dedede] font-['Roboto',sans-serif] text-[7px] pr-[3px]">
        <Icon name="sync" className="size-[6px] mr-[2px]" />
        <span>London/Heathrow (ASHRAE Climate Zone derived)</span>
        <span className="ml-[10px]">38,</span>
        <span className="ml-[10px]">34</span>
        <span className="ml-[6px] w-1 h-[5px] border border-[#bbb]" />
        <span className="ml-[3px]">Tasks</span>
        <span className="ml-2 w-1 h-[3px] border-y border-[#bbb]" />
        <span className="ml-[2px] text-[#888]">No Alerts</span>
      </footer>
      <div className="h-[22px] shrink-0 bg-[#f1f1f1]" />
    </div>
  )
}
